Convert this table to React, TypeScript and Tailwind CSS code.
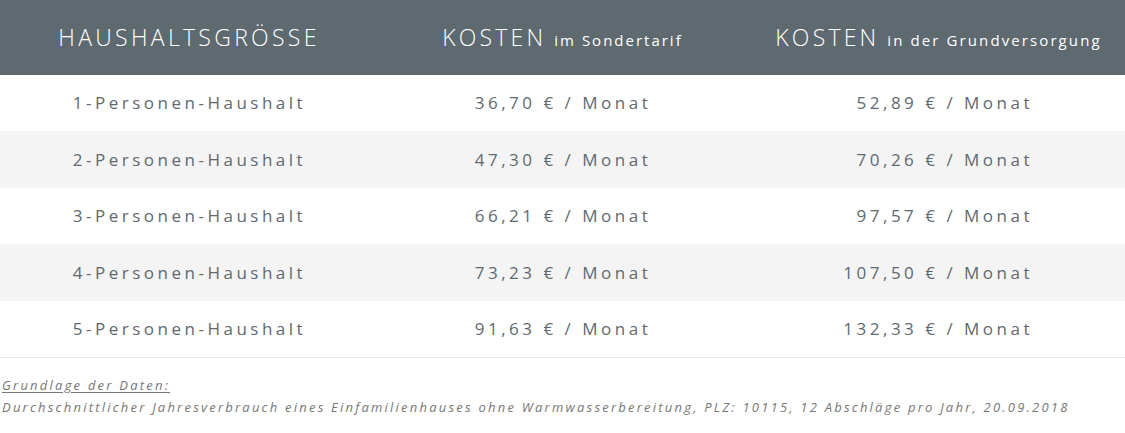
const rows = [
  { size: "1-Personen-Haushalt", special: "36,70 € / Monat", basic: "52,89 € / Monat" },
  { size: "2-Personen-Haushalt", special: "47,30 € / Monat", basic: "70,26 € / Monat" },
  { size: "3-Personen-Haushalt", special: "66,21 € / Monat", basic: "97,57 € / Monat" },
  { size: "4-Personen-Haushalt", special: "73,23 € / Monat", basic: "107,50 € / Monat" },
  { size: "5-Personen-Haushalt", special: "91,63 € / Monat", basic: "132,33 € / Monat" },
];

export default function App() {
  return (
    <div className="w-[1125px] h-[433px] bg-white font-['Open_Sans',sans-serif] text-[#5f6970]">
      <div className="grid h-[75px] grid-cols-3 items-center bg-[#5f6970] text-white">
        <div className="pl-[3px] text-center text-[23px] font-light tracking-[3.3px]">HAUSHALTSGRÖSSE</div>
        <div className="text-center">
          <span className="text-[23px] font-light tracking-[3.2px]">KOSTEN</span>
          <span className="ml-2 text-[15px] tracking-[2px]">im Sondertarif</span>
        </div>
        <div className="pl-[2px] text-center">
          <span className="text-[23px] font-light tracking-[3.2px]">KOSTEN</span>
          <span className="ml-2 text-[15px] tracking-[2.1px]">in der Grundversorgung</span>
        </div>
      </div>
      <div className="border-b border-[#e6e6e6]">
        {rows.map((row, i) => (
          <div
            key={row.size}
            className={`grid h-[56.4px] grid-cols-3 items-center text-[17px] tracking-[3.5px] ${
              i % 2 === 1 ? "bg-[#f4f4f4]" : "bg-white"
            }`}
          >
            <div className="pl-[4px] text-center">{row.size}</div>
            <div className="pl-[1px] text-center">{row.special}</div>
            <div className="pr-[92px] text-right">{row.basic}</div>
          </div>
        ))}
      </div>
      <div className="pl-[2px] pt-[16px] text-[13px] italic leading-[22px] tracking-[2.22px] text-[#777]">
        <div className="underline underline-offset-2">Grundlage der Daten:</div>
        <div>
          Durchschnittlicher Jahresverbrauch eines Einfamilienhauses ohne Warmwasserbereitung, PLZ: 10115, 12
          Abschläge pro Jahr, 20.09.2018
        </div>
      </div>
    </div>
  );
}
